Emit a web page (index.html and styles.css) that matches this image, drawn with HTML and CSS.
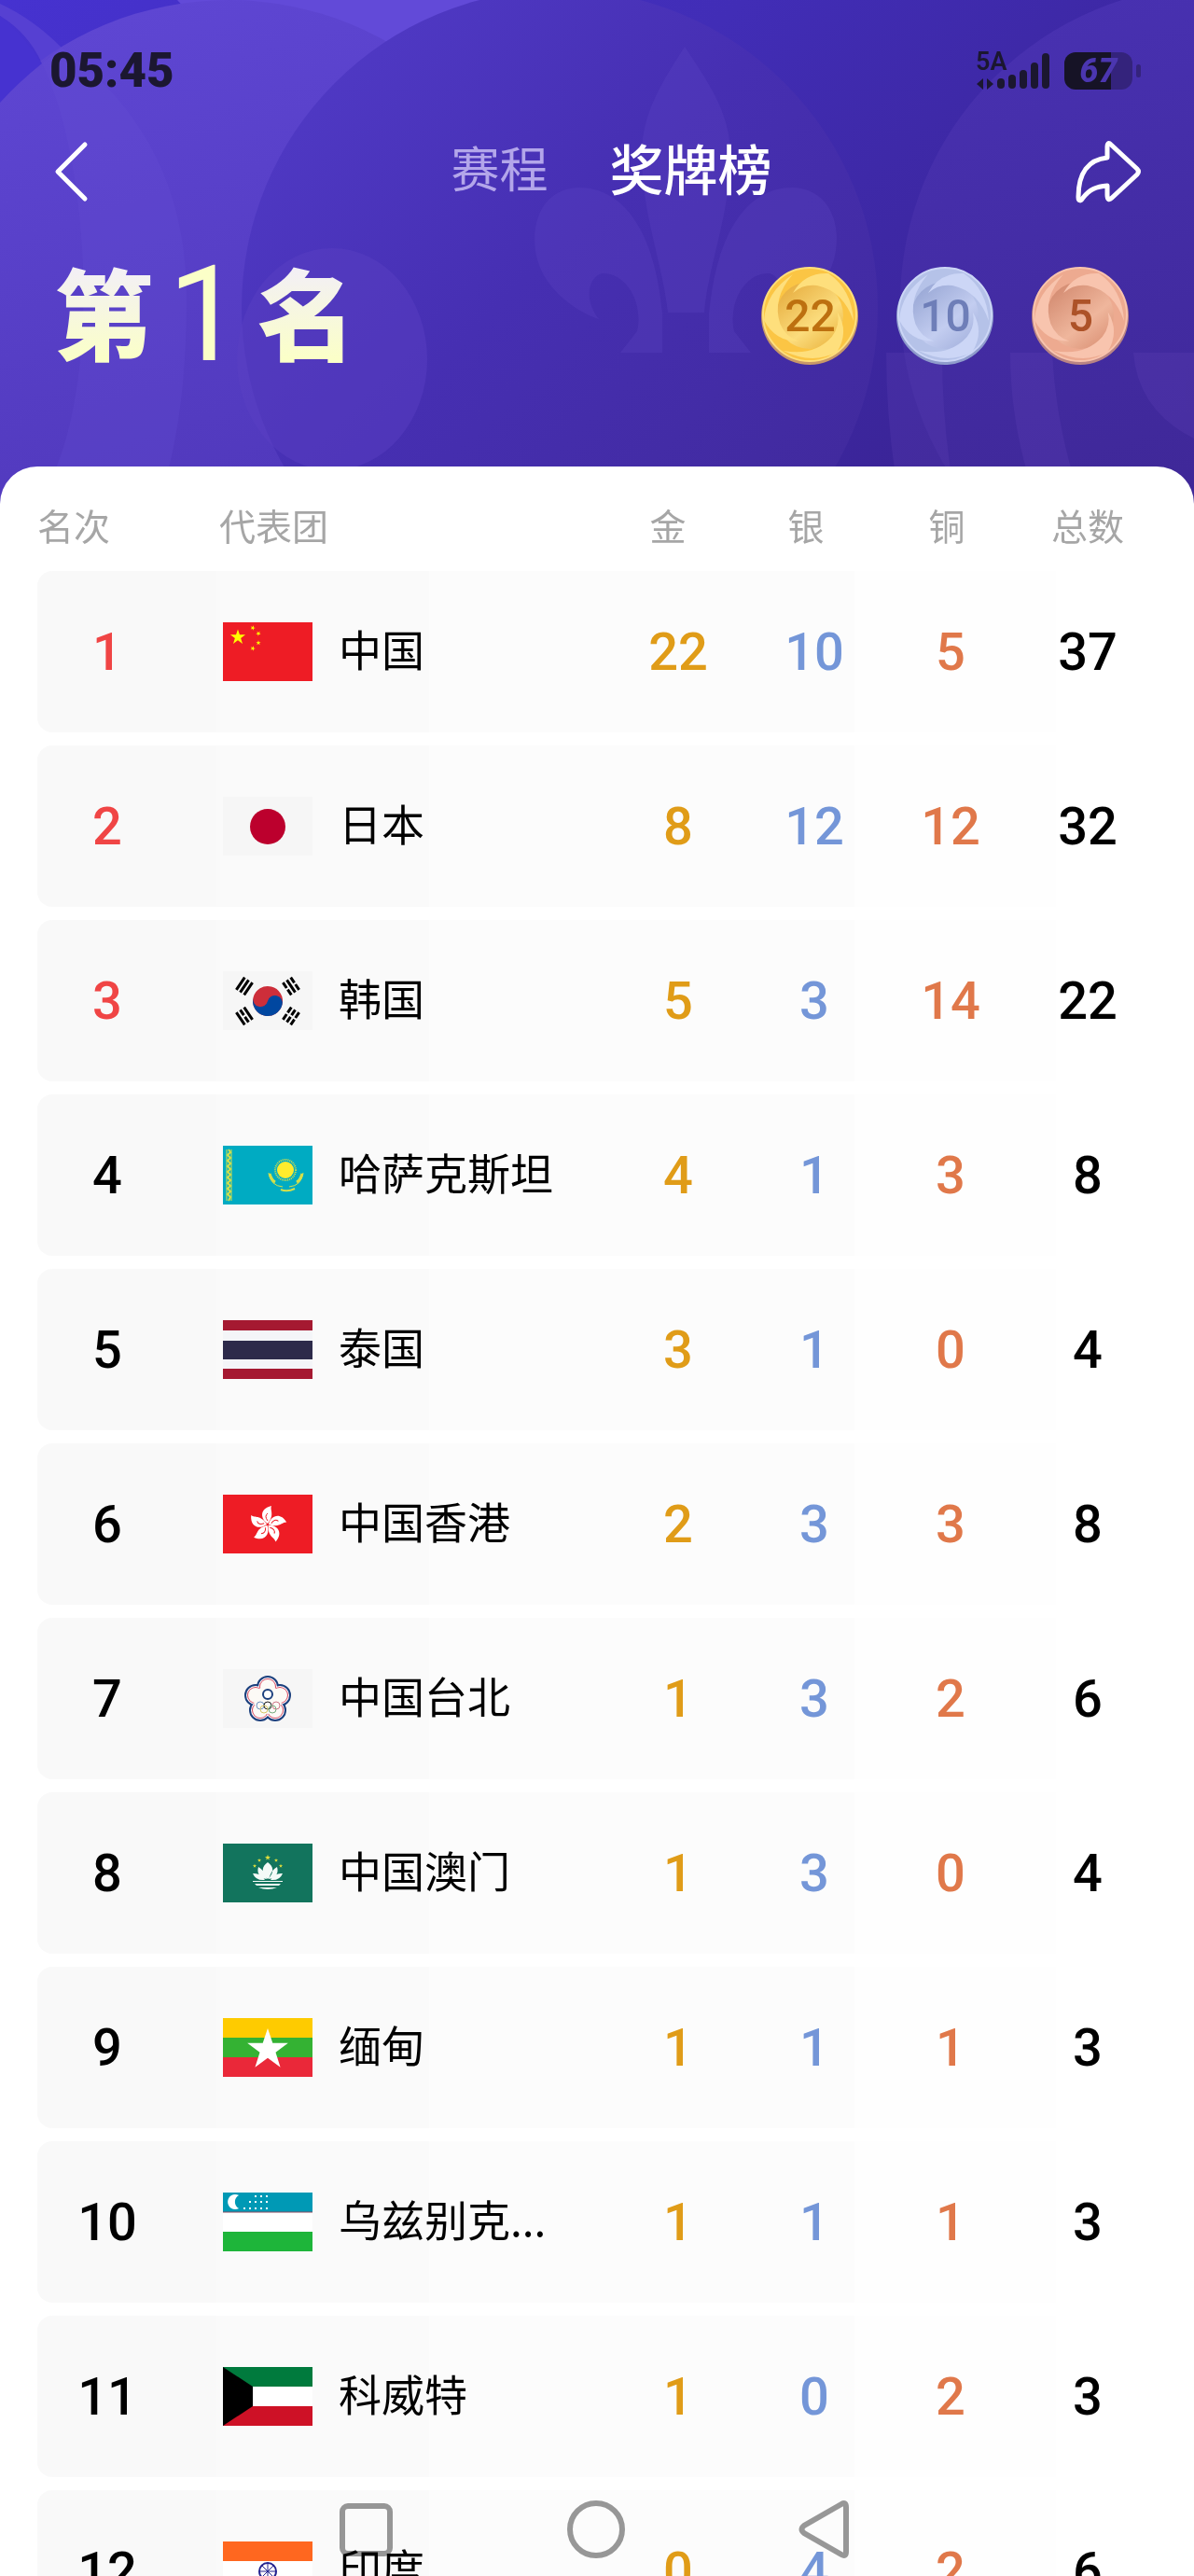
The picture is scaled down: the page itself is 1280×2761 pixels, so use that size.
FILE: index.html
```html
<!DOCTYPE html>
<html lang="zh-CN">
<head>
<meta charset="utf-8">
<meta name="viewport" content="width=device-width, initial-scale=1">
<title>奖牌榜</title>
<link rel="stylesheet" href="styles.css">
</head>
<body>
<div class="app">
  <svg class="backdrop" viewBox="0 0 1280 540" preserveAspectRatio="none" aria-hidden="true">
    <defs>
      <linearGradient id="base" x1="0" y1="0" x2="1" y2="0.5"><stop offset="0" stop-color="#4632d0"/><stop offset="0.5" stop-color="#412db6"/><stop offset="1" stop-color="#3a2496"/></linearGradient>
      <linearGradient id="lobe" x1="0.2" y1="0" x2="0.5" y2="1"><stop offset="0" stop-color="#5f47d4"/><stop offset="1" stop-color="#4d35b6"/></linearGradient>
      <linearGradient id="mid" x1="0" y1="0.1" x2="0.8" y2="0.9"><stop offset="0" stop-color="#513bc8"/><stop offset="0.5" stop-color="#462fb2"/><stop offset="1" stop-color="#412a9e"/></linearGradient>
      <linearGradient id="east" x1="0" y1="0" x2="0.3" y2="1"><stop offset="0" stop-color="#4932b4"/><stop offset="1" stop-color="#3d2693"/></linearGradient>
    </defs>
    <rect width="1280" height="540" fill="url(#base)"/>
    <path d="M190 0H600V120H300Z" fill="#624ad8"/>
    <path d="M0 17Q30 35 45 68L66 51Q35 20 0 4Z" fill="#5640d2"/>
    <circle cx="245" cy="345" r="345" fill="url(#lobe)"/>
    <path d="M0 17Q26 38 45 68Q20 88 0 110Z" fill="#4632d0"/>
    <path d="M66 51C160 120 200 210 200 320C200 410 190 480 170 540H40C110 440 100 180 45 68Z" fill="#6a50d8" opacity=".22"/>
    <circle cx="600" cy="330" r="341" fill="url(#mid)"/>
    <ellipse cx="356" cy="385" rx="102" ry="119" fill="#5a40c4" opacity=".45"/>
    <g fill="#6a50cc" opacity=".2">
      <path d="M734 50C712 85 688 120 688 165C688 230 710 280 716 335H755C760 280 783 230 783 165C783 120 757 85 734 50Z"/>
      <path id="side-petal" d="M710 335C702 250 670 201 620 201C575 203 568 250 576 278C585 312 620 335 642 342C626 322 630 298 645 293C672 292 690 325 683 355L665 378H710Z"/>
      <use href="#side-petal" transform="translate(1470) scale(-1 1)"/>
    </g>
    <circle cx="1306" cy="325" r="341" fill="url(#east)"/>
    <g fill="#6a4ac0" opacity=".2">
      <path d="M950 378H1010Q1010 460 1025 540H965Q950 460 950 378Z"/>
      <path d="M1083 378H1128Q1132 460 1160 540H1112Q1083 460 1083 378Z"/>
      <path d="M1215 378H1280V470Q1220 440 1215 378Z"/>
    </g>
  </svg>

  <header class="top">
    <div class="status">
      <time class="clock">05:45</time>
      <div class="indicators">
        <div class="network">
          <span>5A</span>
          <svg width="80" height="40" viewBox="0 0 80 40" aria-hidden="true">
            <path d="M1 34L8 28V40ZM19 34L12 28V40Z" fill="#1b1730"/>
            <g stroke="#1b1730" stroke-width="8" stroke-linecap="round"><path d="M27 32V35M39 28V35M51 23V35M63 15V35M75 5V35"/></g>
          </svg>
        </div>
        <div class="battery"><span>67</span></div>
      </div>
    </div>
    <nav class="bar">
      <button class="icon-button" type="button" aria-label="返回">
        <svg width="44" height="70" viewBox="0 0 44 70"><path d="M38 6L9 35L38 64" fill="none" stroke="#fff" stroke-width="5" stroke-linecap="round" stroke-linejoin="round"/></svg>
      </button>
      <div class="tabs">
        <a class="tab" href="#schedule">赛程</a>
        <a class="tab tab-active" href="#medals" aria-current="page">奖牌榜</a>
      </div>
      <button class="icon-button share" type="button" aria-label="分享">
        <svg width="72" height="70" viewBox="0 0 72 70"><path d="M39 6C36 3 35 6 35 8V20C15 22 4 36 4 62C4 67 7 67 9 63C16 54 23 51 35 50V60C35 65 37 66 40 63L67 38Q70 35 67 32Z" fill="none" stroke="#fff" stroke-width="5" stroke-linejoin="round"/></svg>
      </button>
    </nav>
    <div class="summary">
      <h1 class="place"><span>第</span><span class="place-number">1</span><span>名</span></h1>
      <div class="medals">
        <div class="medal medal-gold"><svg viewBox="0 0 105 105" aria-hidden="true"><use href="#swirl"/></svg><span>22</span></div>
        <div class="medal medal-silver"><svg viewBox="0 0 105 105" aria-hidden="true"><use href="#swirl"/></svg><span>10</span></div>
        <div class="medal medal-bronze"><svg viewBox="0 0 105 105" aria-hidden="true"><use href="#swirl"/></svg><span>5</span></div>
      </div>
    </div>
  </header>

  <svg class="defs" aria-hidden="true">
    <defs>
      <linearGradient id="disc-gold" x1="0.1" y1="0" x2="0.9" y2="1"><stop offset="0" stop-color="#e5a93a"/><stop offset="0.6" stop-color="#fbdc7c"/><stop offset="1" stop-color="#eab23c"/></linearGradient>
      <linearGradient id="disc-silver" x1="0.1" y1="0" x2="0.9" y2="1"><stop offset="0" stop-color="#94a3d2"/><stop offset="0.6" stop-color="#c3cdf0"/><stop offset="1" stop-color="#a0aedb"/></linearGradient>
      <linearGradient id="disc-bronze" x1="0.1" y1="0" x2="0.9" y2="1"><stop offset="0" stop-color="#d0866c"/><stop offset="0.6" stop-color="#efb69c"/><stop offset="1" stop-color="#d98e72"/></linearGradient>
      <path id="blade" d="M34 28Q46 6 72 7Q97 24 99 58Q88 26 60 20Q45 18 34 28Z"/>
      <symbol id="swirl" viewBox="0 0 105 105">
        <circle cx="52" cy="53" r="52" class="edge"/>
        <circle cx="52" cy="51" r="50" class="rim"/>
        <circle cx="52" cy="52" r="36" class="disc"/>
        <g class="blades"><use href="#blade"/><use href="#blade" transform="rotate(120 52 52)"/><use href="#blade" transform="rotate(240 52 52)"/></g>
      </symbol>
      <path id="star" d="M0-10L2.3-3.1H9.5L3.7 1.2L5.9 8.1L0 3.8L-5.9 8.1L-3.7 1.2L-9.5-3.1H-2.3Z"/>
      <g id="petal"><path d="M48 31C40 26 39 15 52 12C50 17 56 21 48 31Z" fill="#fff"/><path d="M48 28Q44 23 48 20" fill="none" stroke="#ee1c25" stroke-width="1"/></g>
      <g id="lobes"><circle cx="48" cy="19" r="8"/><circle cx="61" cy="28" r="8"/><circle cx="56" cy="44" r="8"/><circle cx="40" cy="44" r="8"/><circle cx="35" cy="28" r="8"/></g>
    </defs>
  </svg>

  <main class="sheet" id="medals">
    <table class="board">
      <thead>
        <tr><th class="rank" scope="col">名次</th><th class="team" scope="col">代表团</th><th class="gold" scope="col">金</th><th class="silver" scope="col">银</th><th class="bronze" scope="col">铜</th><th class="total" scope="col">总数</th></tr>
      </thead>
      <tbody>
        <tr class="leader"><td class="rank">1</td><td class="team"><div class="country">
          <svg class="flag" viewBox="0 0 96 63" aria-hidden="true"><path fill="#ee1c25" d="M0 0H96V63H0Z"/><g fill="#ff0"><use href="#star" transform="translate(16 16) scale(.85)"/><use href="#star" transform="translate(32 6) rotate(20) scale(.28)"/><use href="#star" transform="translate(38 12) rotate(40) scale(.28)"/><use href="#star" transform="translate(38 22) scale(.28)"/><use href="#star" transform="translate(32 28) rotate(20) scale(.28)"/></g></svg>
          <span class="name">中国</span></div></td><td class="gold">22</td><td class="silver">10</td><td class="bronze">5</td><td class="total">37</td></tr>
        <tr class="leader"><td class="rank">2</td><td class="team"><div class="country">
          <svg class="flag" viewBox="0 0 96 63" aria-hidden="true"><path fill="#f6f6f6" d="M0 0H96V63H0Z"/><circle cx="48" cy="32" r="19" fill="#bc002d"/></svg>
          <span class="name">日本</span></div></td><td class="gold">8</td><td class="silver">12</td><td class="bronze">12</td><td class="total">32</td></tr>
        <tr class="leader"><td class="rank">3</td><td class="team"><div class="country">
          <svg class="flag" viewBox="0 0 96 63" aria-hidden="true"><path fill="#f6f6f6" d="M0 0H96V63H0Z"/><g transform="rotate(14 48 32)"><circle cx="48" cy="32" r="16" fill="#cd2e3a"/><path d="M32 32A8 8 0 0 0 48 32A8 8 0 0 1 64 32A16 16 0 0 1 32 32Z" fill="#0047a0"/></g>
            <g stroke="#000" stroke-width="3"><g transform="translate(23 16) rotate(-56)"><path d="M-8-5H8M-8 0H8M-8 5H8"/></g><g transform="translate(73 48) rotate(-56)"><path d="M-8-5H-1M1-5H8M-8 0H-1M1 0H8M-8 5H-1M1 5H8"/></g><g transform="translate(73 16) rotate(56)"><path d="M-8-5H-1M1-5H8M-8 0H8M-8 5H-1M1 5H8"/></g><g transform="translate(23 48) rotate(56)"><path d="M-8-5H8M-8 0H-1M1 0H8M-8 5H8"/></g></g></svg>
          <span class="name">韩国</span></div></td><td class="gold">5</td><td class="silver">3</td><td class="bronze">14</td><td class="total">22</td></tr>
        <tr><td class="rank">4</td><td class="team"><div class="country">
          <svg class="flag" viewBox="0 0 96 63" aria-hidden="true"><path fill="#00abc2" d="M0 0H96V63H0Z"/><g fill="none" stroke="#d5e04a"><path d="M4 4V59M9 4V59" stroke-width="1"/><path d="M6 4L8 7L5 10L8 13L5 16L8 19L5 22L8 25L5 28L8 31L5 34L8 37L5 40L8 43L5 46L8 49L5 52L8 55L6 59" stroke-width="2"/><circle cx="67" cy="26" r="11" stroke-width="2" stroke-dasharray="1 1"/><path d="M49 29Q51 43 64 44M86 29Q84 43 71 44" stroke-width="1"/><path d="M62 47Q69 50 77 46" stroke-width="2"/><path d="M50 30Q52 37 56 39M85 30Q83 37 79 39" stroke-width="3"/></g><circle cx="67" cy="26" r="9" fill="#ffec2d"/></svg>
          <span class="name">哈萨克斯坦</span></div></td><td class="gold">4</td><td class="silver">1</td><td class="bronze">3</td><td class="total">8</td></tr>
        <tr><td class="rank">5</td><td class="team"><div class="country">
          <svg class="flag" viewBox="0 0 96 63" aria-hidden="true"><path fill="#a51931" d="M0 0H96V63H0Z"/><path fill="#f4f5f8" d="M0 11H96V52H0Z"/><path fill="#2d2a4a" d="M0 22H96V42H0Z"/></svg>
          <span class="name">泰国</span></div></td><td class="gold">3</td><td class="silver">1</td><td class="bronze">0</td><td class="total">4</td></tr>
        <tr><td class="rank">6</td><td class="team"><div class="country">
          <svg class="flag" viewBox="0 0 96 63" aria-hidden="true"><path fill="#ee1c25" d="M0 0H96V63H0Z"/><use href="#petal"/><use href="#petal" transform="rotate(72 48 32)"/><use href="#petal" transform="rotate(144 48 32)"/><use href="#petal" transform="rotate(216 48 32)"/><use href="#petal" transform="rotate(288 48 32)"/></svg>
          <span class="name">中国香港</span></div></td><td class="gold">2</td><td class="silver">3</td><td class="bronze">3</td><td class="total">8</td></tr>
        <tr><td class="rank">7</td><td class="team"><div class="country">
          <svg class="flag" viewBox="0 0 96 63" aria-hidden="true"><path fill="#f6f6f6" d="M0 0H96V63H0Z"/><use href="#lobes" fill="#1b3f7d" stroke="#1b3f7d" stroke-width="8"/><use href="#lobes" fill="#fff" stroke="#fff" stroke-width="4"/><use href="#lobes" fill="#d64a62" stroke="#d64a62" stroke-width="2"/><use href="#lobes" fill="#fcfaf6"/><circle cx="48" cy="33" r="15" fill="#fcfaf6"/><circle cx="48" cy="27" r="5" fill="#fff" stroke="#1b3f7d" stroke-width="2"/><g fill="none" stroke-width="1"><circle cx="40" cy="39" r="4" stroke="#6f93c0"/><circle cx="48" cy="39" r="4" stroke="#222"/><circle cx="57" cy="39" r="4" stroke="#d07888"/><circle cx="44" cy="43" r="4" stroke="#d8c868"/><circle cx="53" cy="43" r="4" stroke="#78ad80"/></g></svg>
          <span class="name">中国台北</span></div></td><td class="gold">1</td><td class="silver">3</td><td class="bronze">2</td><td class="total">6</td></tr>
        <tr><td class="rank">8</td><td class="team"><div class="country">
          <svg class="flag" viewBox="0 0 96 63" aria-hidden="true"><path fill="#12745d" d="M0 0H96V63H0Z"/><g fill="#e6e03a"><use href="#star" transform="translate(48 15) scale(.32)"/><use href="#star" transform="translate(39 18) scale(.22)"/><use href="#star" transform="translate(57 18) scale(.22)"/><use href="#star" transform="translate(34 24) scale(.22)"/><use href="#star" transform="translate(62 24) scale(.22)"/></g><path fill="#f4faf7" d="M48 38C40 31 42 24 48 20C54 24 56 31 48 38ZM47 38C39 37 36 31 38 25Q44 28 47 38ZM49 38C57 37 60 31 58 25Q52 28 49 38ZM45 39Q35 40 32 32Q40 31 45 39ZM51 39Q61 40 64 32Q56 31 51 39ZM32 40H64V41H32ZM34 43H62L60 45H36ZM38 47H58Q48 51 38 47Z"/></svg>
          <span class="name">中国澳门</span></div></td><td class="gold">1</td><td class="silver">3</td><td class="bronze">0</td><td class="total">4</td></tr>
        <tr><td class="rank">9</td><td class="team"><div class="country">
          <svg class="flag" viewBox="0 0 96 63" aria-hidden="true"><path fill="#fecb00" d="M0 0H96V21H0Z"/><path fill="#34b233" d="M0 21H96V42H0Z"/><path fill="#ea2839" d="M0 42H96V63H0Z"/><use href="#star" fill="#fff" transform="translate(48 34) scale(2.3)"/></svg>
          <span class="name">缅甸</span></div></td><td class="gold">1</td><td class="silver">1</td><td class="bronze">1</td><td class="total">3</td></tr>
        <tr><td class="rank">10</td><td class="team"><div class="country">
          <svg class="flag" viewBox="0 0 96 63" aria-hidden="true"><path fill="#0099b5" d="M0 0H96V21H0Z"/><path fill="#fff" d="M0 21H96V42H0Z"/><path fill="#1eb53a" d="M0 42H96V63H0Z"/><path d="M0 21H96" stroke="#8c4a60"/><path fill="#fff" d="M17 3A8 8 0 1 0 17 17A8 8 0 0 1 17 3Z"/><path d="M34 4H49M28 10H49M22 17H49" stroke="#fff" stroke-width="2" stroke-dasharray="2 4"/></svg>
          <span class="name">乌兹别克...</span></div></td><td class="gold">1</td><td class="silver">1</td><td class="bronze">1</td><td class="total">3</td></tr>
        <tr><td class="rank">11</td><td class="team"><div class="country">
          <svg class="flag" viewBox="0 0 96 63" aria-hidden="true"><path fill="#007a3d" d="M0 0H96V21H0Z"/><path fill="#fff" d="M0 21H96V42H0Z"/><path fill="#ce1126" d="M0 42H96V63H0Z"/><path d="M0 0L32 21V42L0 63Z"/></svg>
          <span class="name">科威特</span></div></td><td class="gold">1</td><td class="silver">0</td><td class="bronze">2</td><td class="total">3</td></tr>
        <tr><td class="rank">12</td><td class="team"><div class="country">
          <svg class="flag" viewBox="0 0 96 63" aria-hidden="true"><path fill="#ff671f" d="M0 0H96V21H0Z"/><path fill="#fff" d="M0 21H96V42H0Z"/><path fill="#046a38" d="M0 42H96V63H0Z"/><g fill="none" stroke="#23238f"><circle cx="48" cy="32" r="9" stroke-width="2"/><path d="M48 23V41M39 32H57M42 26L54 38M54 26L42 38"/></g></svg>
          <span class="name">印度</span></div></td><td class="gold">0</td><td class="silver">4</td><td class="bronze">2</td><td class="total">6</td></tr>
      </tbody>
    </table>
  </main>

  <nav class="system-nav" aria-label="系统导航">
    <button class="icon-button" type="button" aria-label="最近任务"><svg width="64" height="64" viewBox="0 0 64 64"><rect x="5" y="7" width="51" height="51" rx="6"/></svg></button>
    <button class="icon-button" type="button" aria-label="主屏幕"><svg width="64" height="64" viewBox="0 0 64 64"><circle cx="31" cy="32" r="28"/></svg></button>
    <button class="icon-button" type="button" aria-label="后退"><svg width="64" height="64" viewBox="0 0 64 64"><path d="M48 5Q53 2 53 8V56Q53 62 48 59L8 36Q3 32 8 28Z"/></svg></button>
  </nav>
</div>
</body>
</html>
```
FILE: styles.css
```css
* { box-sizing: border-box; }

body {
  margin: 0;
  font-family: "Noto Sans CJK SC", sans-serif;
  color: #000;
}

.app {
  position: relative;
  display: flex;
  flex-direction: column;
  height: 100vh;
  overflow: hidden;
  background: #fff;
}

.backdrop {
  position: absolute;
  top: 0;
  left: 0;
  width: 100%;
  height: 540px;
}

.defs { position: absolute; width: 0; height: 0; }

.icon-button {
  display: flex;
  padding: 0;
  border: 0;
  background: none;
  cursor: pointer;
}

/* Header */
.top {
  position: relative;
  display: flex;
  flex-direction: column;
  gap: 42px;
  padding: 51px 56px 91px 53px;
}

.status {
  display: flex;
  justify-content: space-between;
  align-items: center;
  height: 50px;
  color: #1b1730;
  font-family: Roboto, sans-serif;
}

.clock { font-size: 51px; font-weight: 900; line-height: 50px; }

.indicators { display: flex; align-items: center; gap: 15px; }

.network { position: relative; display: flex; }

.network span {
  position: absolute;
  top: -4px;
  left: 0;
  font-size: 27px;
  font-weight: 600;
  line-height: 28px;
}

.battery {
  position: relative;
  width: 73px;
  height: 40px;
  margin-right: 10px;
  border-radius: 12px;
  background: linear-gradient(90deg, #161326 68%, #34237c 68%);
  color: #4b36b0;
  font-size: 36px;
  font-style: italic;
  font-weight: 800;
  line-height: 40px;
  text-align: center;
}

.battery::after {
  content: "";
  position: absolute;
  top: 13px;
  right: -9px;
  width: 5px;
  height: 14px;
  border-radius: 3px;
  background: #34237c;
}

.bar {
  display: grid;
  grid-template-columns: 1fr auto 1fr;
  align-items: center;
  height: 82px;
}

.share { justify-self: end; }

.tabs {
  display: flex;
  align-items: center;
  gap: 66px;
  padding: 0 0 10px 34px;
}

.tab {
  color: #b3a6ea;
  font-size: 52px;
  line-height: 72px;
  text-decoration: none;
}

.tab-active { color: #fff; font-size: 58px; font-weight: 500; }

.summary {
  display: flex;
  justify-content: space-between;
  align-items: center;
  height: 142px;
  padding: 0 13px 0 5px;
}

.place {
  display: flex;
  align-items: center;
  gap: 16px;
  margin: 0;
  font-size: 106px;
  font-weight: 900;
  line-height: 142px;
}

.place span {
  padding-bottom: 12px;
  background: linear-gradient(#f3f0f4 20%, #fbffc8 80%);
  background-clip: text;
  -webkit-background-clip: text;
  color: transparent;
}

.place .place-number {
  padding: 0;
  background-image: linear-gradient(#fbffc8, #fbffc8);
  font-family: Roboto, sans-serif;
  font-size: 142px;
  font-weight: 400;
}

.medals { display: flex; gap: 40px; }

.medal {
  position: relative;
  display: flex;
  justify-content: center;
  align-items: center;
  width: 105px;
  height: 105px;
  font-family: Roboto, sans-serif;
  font-size: 48px;
  font-weight: 500;
}

.medal svg { position: absolute; inset: 0; }
.medal span { position: relative; }
.medal-gold { --edge: #c89868; --rim: #fbc544; --disc: url(#disc-gold); --blade: #fedf7c; color: #bd7010; }
.medal-silver { --edge: #8f9ccc; --rim: #b5c2e8; --disc: url(#disc-silver); --blade: #ccd6f6; color: #6e7eb8; }
.medal-bronze { --edge: #b98484; --rim: #edaa90; --disc: url(#disc-bronze); --blade: #f8c4ae; color: #ad5228; }
.edge { fill: var(--edge); }
.rim { fill: var(--rim); stroke: var(--blade); stroke-width: 2; }
.disc { fill: var(--disc); }
.blades { fill: var(--blade); }

/* Medal table */
.sheet {
  position: relative;
  flex: 1;
  min-height: 0;
  padding: 0 40px;
  overflow: hidden;
  border-radius: 40px 40px 0 0;
  background: #fff;
}

.board {
  width: 100%;
  table-layout: fixed;
  border-collapse: separate;
  border-spacing: 0 14px;
}

th, td { padding: 0; text-align: center; }

th {
  height: 84px;
  padding-top: 12px;
  color: #a6a6a6;
  font-size: 39px;
  font-weight: 400;
  line-height: 48px;
}

td {
  height: 173px;
  font-family: Roboto, sans-serif;
  font-size: 56px;
  font-weight: 500;
  line-height: 64px;
}

.rank { width: 150px; }
.gold, .silver, .bronze { width: 146px; }
.total { width: 148px; }
th.rank { text-align: left; }
th.team { padding-left: 45px; text-align: left; }
th.gold { padding-right: 22px; }
th.silver { padding-right: 18px; }
th.bronze { padding-right: 8px; }

tbody tr { background: linear-gradient(90deg, #f9f9f9 16%, #fafafa 16% 35%, #fcfcfc 35% 73%, #fefefe 73% 91%, #fff 91%); }
td.rank { border-radius: 16px 0 0 16px; }
td.team { padding-left: 49px; }
td.gold { color: #e09c18; }
td.silver { color: #7496d8; }
td.bronze { color: #e0784a; }
.leader .rank { color: #f04545; }

.country { display: flex; align-items: center; gap: 28px; }
.flag { flex: none; width: 96px; height: 63px; }

.name {
  padding-bottom: 10px;
  font-family: "Noto Sans CJK SC", sans-serif;
  font-size: 46px;
  font-weight: 400;
  white-space: nowrap;
}

/* System navigation overlay */
.system-nav {
  position: absolute;
  bottom: 18px;
  left: 0;
  right: 0;
  display: flex;
  justify-content: center;
  gap: 182px;
}

.system-nav svg { fill: none; stroke: rgba(0, 0, 0, .4); stroke-width: 6; }
```
